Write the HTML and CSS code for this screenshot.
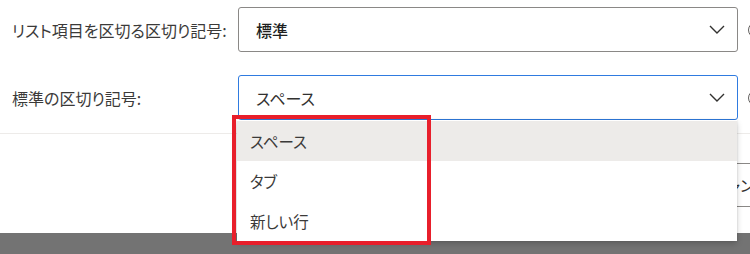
FILE: index.html
```html
<!DOCTYPE html>
<html lang="ja">
<head>
<meta charset="utf-8">
<link rel="stylesheet" href="styles.css">
</head>
<body>
<div class="screen">
  <div class="panel">
    <div class="form">
      <div class="row">
        <label class="label">リスト項目を区切る区切り記号:</label>
        <div class="select">
          <span class="value strong">標準</span>
          <svg class="chev" width="16" height="9" viewBox="0 0 16 9"><path d="M1 1l7 7 7-7" fill="none" stroke="#323130" stroke-width="1.4"/></svg>
        </div>
        <span class="info"></span>
      </div>
      <div class="row">
        <label class="label">標準の区切り記号:</label>
        <div class="select focused">
          <span class="value">スペース</span>
          <svg class="chev" width="16" height="9" viewBox="0 0 16 9"><path d="M1 1l7 7 7-7" fill="none" stroke="#323130" stroke-width="1.4"/></svg>
        </div>
        <span class="info"></span>
      </div>
    </div>
    <div class="divider"></div>
    <div class="footer">
      <button class="btn">キャンセル</button>
    </div>
  </div>
  <div class="band"></div>

  <ul class="dropdown">
    <li class="opt selected">スペース</li>
    <li class="opt">タブ</li>
    <li class="opt">新しい行</li>
  </ul>
  <div class="highlight"></div>
</div>
</body>
</html>
```
FILE: styles.css
```css
* { box-sizing: border-box; }
html, body { margin: 0; padding: 0; background: #fff; }
body {
  width: 750px;
  height: 254px;
  overflow: hidden;
  font-family: "Noto Sans CJK JP", "Noto Sans", sans-serif;
  color: #323130;
  font-feature-settings: "palt";
}
.screen { position: relative; width: 750px; height: 254px; overflow: hidden; }
.panel { height: 233px; background: #fff; }
.form { padding-top: 7px; display: flex; flex-direction: column; gap: 23px; }
.row { display: flex; align-items: center; height: 45px; }
.label { width: 238px; padding-left: 12px; font-size: 16px; color: #3b3a39; flex: none; white-space: nowrap; }
.select {
  flex: none;
  width: 500px;
  height: 45px;
  border: 1px solid #8a8886;
  border-radius: 3px;
  display: flex;
  align-items: center;
  justify-content: space-between;
  padding: 0 12px 0 17px;
}
.select.focused { border: 1px solid #2f7be0; }
.value { font-size: 16px; color: #323130; }
.value.strong { font-weight: 500; color: #201f1e; }
.chev { display: block; }
.info {
  flex: none;
  margin-left: 10px;
  width: 16px; height: 16px;
  border: 1.5px solid #605e5c;
  border-radius: 50%;
}
.divider { margin-top: 13px; height: 1px; background: #edebe9; }
.footer { display: flex; justify-content: flex-end; padding-top: 29px; margin-right: -48px; }
.btn {
  height: 44px;
  width: 100px;
  border: 1px solid #8a8886;
  border-radius: 3px;
  background: #fff;
  font-family: inherit;
  font-size: 15.5px;
  color: #323130;
  font-feature-settings: "palt";
  white-space: nowrap;
}
.band { height: 21px; background: #737373; }

.dropdown {
  position: absolute;
  left: 237px;
  top: 120px;
  width: 500px;
  margin: 0;
  padding: 1px 0 0;
  list-style: none;
  background: #fff;
  box-shadow: 0 3px 6px rgba(0,0,0,0.18), 0 0 2px rgba(0,0,0,0.12);
}
.opt {
  height: 40px;
  display: flex;
  align-items: center;
  padding-left: 13px;
  font-size: 15.5px;
  color: #3b3a39;
}
.opt.selected { background: #edebe9; }
.highlight {
  position: absolute;
  left: 232px;
  top: 115px;
  width: 199px;
  height: 130px;
  border: 4px solid #e81f2b;
}
```
